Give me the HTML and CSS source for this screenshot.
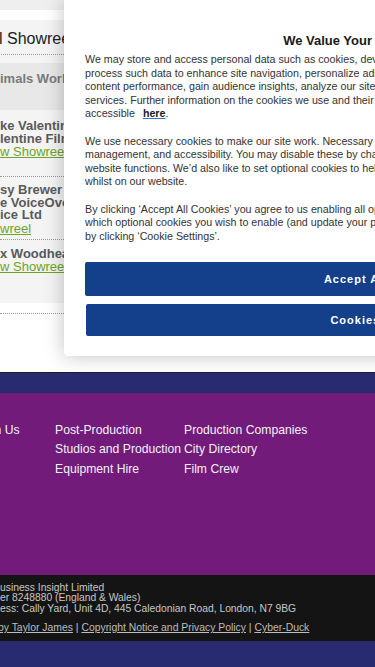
FILE: index.html
```html
<!DOCTYPE html>
<html lang="en">
<head>
    <meta charset="UTF-8">
    <meta name="viewport" content="width=device-width, initial-scale=1.0">
    <title>Showreels</title>
    <link rel="stylesheet" href="styles.css">
</head>
<body>

<div class="page">
    <div class="top">
        <div class="list">
            <div class="strip"></div>
            <div class="panel">
                <h2 class="heading">l Showreels</h2>
                <div class="category">imals Work</div>
                <div class="entry entry-first">
                    <p class="name">ke Valentine<br>lentine Films</p>
                    <a href="#" class="reel">w Showreel</a>
                </div>
                <div class="entry">
                    <p class="name">sy Brewer<br>e VoiceOver<br>ice Ltd</p>
                    <a href="#" class="reel">wreel</a>
                </div>
                <div class="entry entry-last">
                    <p class="name">x Woodhead</p>
                    <a href="#" class="reel">w Showreel</a>
                </div>
            </div>
            <div class="divider"></div>
        </div>

        <!-- cookie banner sits over the page -->
        <div class="cookie-modal">
            <h3 class="cookie-title">We Value Your Privacy</h3>
            <p class="cookie-text">We may store and access personal data such as cookies, device identifiers or other similar technologies on your device and<br>
                process such data to enhance site navigation, personalize ads and content, measure ad and<br>
                content performance, gain audience insights, analyze our site usage and improve our products and<br>
                services. Further information on the cookies we use and their purposes is<br>
                accessible <a href="#" class="cookie-link">here</a>.</p>
            <p class="cookie-text">We use necessary cookies to make our site work. Necessary cookies enable core functionality such as security, network<br>
                management, and accessibility. You may disable these by changing your browser settings, but this may affect how the<br>
                website functions. We&rsquo;d also like to set optional cookies to help us improve your experience<br>
                whilst on our website.</p>
            <p class="cookie-text">By clicking &lsquo;Accept All Cookies&rsquo; you agree to us enabling all optional cookies. Alternatively, you can choose<br>
                which optional cookies you wish to enable (and update your preferences at any time)<br>
                by clicking &lsquo;Cookie Settings&rsquo;.</p>
            <div class="cookie-actions">
                <button type="button" class="cookie-btn">Accept All Cookies</button>
                <button type="button" class="cookie-btn cookie-btn-settings">Cookies Settings</button>
            </div>
        </div>
    </div>

    <div class="band"></div>

    <footer class="site-links">
        <div class="link-col">
            <a href="#">Join Us</a>
        </div>
        <div class="link-col">
            <a href="#">Post-Production</a>
            <a href="#">Studios and Production</a>
            <a href="#">Equipment Hire</a>
        </div>
        <div class="link-col">
            <a href="#">Production Companies</a>
            <a href="#">City Directory</a>
            <a href="#">Film Crew</a>
        </div>
    </footer>

    <div class="legal">
        <p class="legal-text">usiness Insight Limited<br>
            er 8248880 (England &amp; Wales)<br>
            ess: Cally Yard, Unit 4D, 445 Caledonian Road, London, N7 9BG</p>
        <p class="legal-links"><a href="#">by Taylor James</a> | <a href="#">Copyright Notice and Privacy Policy</a> | <a href="#">Cyber-Duck</a></p>
    </div>

    <div class="band band-bottom"></div>
</div>

</body>
</html>
```

FILE: styles.css
```css
body {
    margin: 0;
    font-family: "Liberation Sans", Arial, sans-serif;
    background-color: white;
    overflow: hidden;
}

.page {
    width: 375px;
}

.top {
    position: relative;
    height: 372px;
    overflow: hidden;
}

/* Showreel list on the left */
.list {
    width: 120px;
    white-space: nowrap;
    overflow: hidden;
}

.strip {
    height: 10px;
    background-color: #efefef;
    margin-bottom: 10px;
}

.panel {
    height: 283px;
    background-color: #f4f4f4;
}

.heading {
    margin: 0 0 0 -1px;
    padding: 9px 0 5px;
    font-size: 16px;
    font-weight: normal;
    line-height: 20px;
    color: #222;
    border-bottom: 1px dotted #999;
}

.category {
    margin-top: 8px;
    height: 47px;
    box-sizing: border-box;
    padding-top: 8px;
    background-color: #e8e8e8;
    font-size: 13px;
    font-weight: bold;
    line-height: 16px;
    color: #7a7a7a;
}

.entry {
    padding: 7px 0 4px;
    border-bottom: 1px dotted #999;
}

.entry-first {
    padding: 10px 0 18px;
}

.entry-last {
    padding-top: 8px;
    border-bottom: none;
}

.name {
    margin: 0;
    font-size: 13px;
    font-weight: bold;
    line-height: 12.5px;
    color: #5a5a5a;
}

.reel {
    display: block;
    font-size: 13px;
    line-height: 13px;
    color: #6ea526;
}

.divider {
    margin-top: 10px;
    border-bottom: 1px dotted #999;
}

/* Cookie banner */
.cookie-modal {
    position: absolute;
    left: 64px;
    top: 0;
    width: 640px;
    height: 356px;
    box-sizing: border-box;
    padding: 33px 0 0 21px;
    background-color: white;
    border-radius: 0 0 4px 4px;
    box-shadow: 0 0 20px rgba(0, 0, 0, 0.25);
    white-space: nowrap;
}

.cookie-title {
    width: 535px;
    margin: 0 0 4px;
    text-align: center;
    font-size: 13px;
    line-height: 16px;
    color: #1a1a1a;
}

.cookie-text {
    margin: 0 0 13.6px;
    font-size: 10.7px;
    line-height: 13.6px;
    color: #333;
}

.cookie-link {
    margin-left: 5px;
    font-weight: bold;
    color: #222;
    text-decoration-color: #3b6fd1;
}

.cookie-actions {
    display: flex;
    flex-direction: column;
    gap: 8px;
    width: 595px;
    margin-top: 19px;
}

.cookie-btn {
    height: 34px;
    border: none;
    border-radius: 2px;
    background-color: #14408b;
    color: white;
    font-family: "Liberation Sans", Arial, sans-serif;
    font-size: 11px;
    font-weight: bold;
    letter-spacing: 1px;
}

.cookie-btn-settings {
    height: 32px;
    margin-left: 1px;
}

/* Footer */
.band {
    height: 20px;
    background-color: #292b70;
    border-top: 1px solid #1b1b3e;
}

.band-bottom {
    height: 26px;
    border-top: none;
}

.site-links {
    display: grid;
    grid-template-columns: 76px 129px auto;
    height: 182px;
    box-sizing: border-box;
    padding-top: 27.5px;
    margin-left: -21px;
    background-color: #731b7b;
}

.site-links .link-col {
    display: flex;
    flex-direction: column;
    white-space: nowrap;
}

.site-links a {
    font-size: 12.2px;
    line-height: 19.5px;
    color: #f2f2f2;
    text-decoration: none;
}

.legal {
    height: 66px;
    box-sizing: border-box;
    padding-top: 7.5px;
    background-color: #141414;
    white-space: nowrap;
    font-size: 10.3px;
    line-height: 10.5px;
    color: #c8c8c8;
}

.legal-text {
    margin: 0;
}

.legal-links {
    margin: 9px 0 0 -2px;
    font-size: 10.4px;
}

.legal-links a {
    color: #bdbdbd;
}
```
